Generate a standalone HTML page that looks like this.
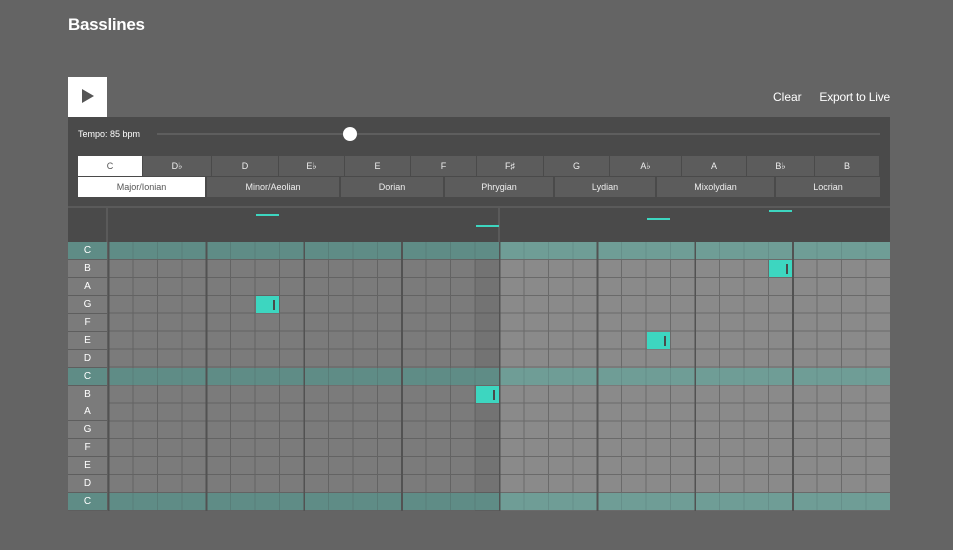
<!DOCTYPE html><html><head><style>
body{margin:0;width:953px;height:550px;background:#646464;font-family:"Liberation Sans",sans-serif;color:#fff;position:relative;overflow:hidden}
.a{position:absolute}
.k{position:absolute;top:156px;height:20px;background:#5c5c5c;font-size:9px;line-height:20px;text-align:center;box-sizing:border-box;border-right:1px solid #4a4a4a;color:#eee}
.m{position:absolute;top:177px;height:20px;background:#5c5c5c;font-size:9px;line-height:20px;text-align:center;box-sizing:border-box;border-right:2px solid #4a4a4a;color:#eee}
.half{position:absolute;top:242px;height:269px;width:391px}
.lab{position:absolute;left:68px;width:39px;height:17px;font-size:10px;line-height:17px;text-align:center;background:#7b7b7b}
.n{position:absolute;width:23px;height:17px;background:#3dd6c0}
.n:after{content:"";position:absolute;right:4px;top:4px;width:2px;height:10px;background:#4a4a4a}
.t{position:absolute;height:2px;width:23px;background:#3dd6c0}
</style></head><body>
<div class="a" style="left:68px;top:15px;font-size:17px;font-weight:bold;letter-spacing:-0.3px">Basslines</div>
<div class="a" style="left:68px;top:77px;width:39px;height:40px;background:#fff"></div>
<div class="a" style="left:82px;top:89px;width:0;height:0;border-left:12px solid #555;border-top:7px solid transparent;border-bottom:7px solid transparent"></div>
<div class="a" style="left:773px;top:90px;font-size:12px">Clear</div>
<div class="a" style="right:63px;top:90px;font-size:12px;letter-spacing:-0.2px">Export to Live</div>
<div class="a" style="left:68px;top:117px;width:822px;height:125px;background:#4a4a4a"></div>
<div class="a" style="left:78px;top:129px;font-size:9px">Tempo: 85 bpm</div>
<div class="a" style="left:157px;top:133px;width:723px;height:2px;background:#5e5e5e"></div>
<div class="a" style="left:343px;top:127px;width:14px;height:14px;border-radius:50%;background:#fff"></div>
<div class="k" style="left:78px;width:65px;background:#fff;color:#555">C</div>
<div class="k" style="left:143px;width:69px">D♭</div>
<div class="k" style="left:212px;width:67px">D</div>
<div class="k" style="left:279px;width:66px">E♭</div>
<div class="k" style="left:345px;width:66px">E</div>
<div class="k" style="left:411px;width:66px">F</div>
<div class="k" style="left:477px;width:67px">F♯</div>
<div class="k" style="left:544px;width:66px">G</div>
<div class="k" style="left:610px;width:72px">A♭</div>
<div class="k" style="left:682px;width:65px">A</div>
<div class="k" style="left:747px;width:68px">B♭</div>
<div class="k" style="left:815px;width:65px">B</div>
<div class="m" style="left:78px;width:129px;background:#fff;color:#555">Major/Ionian</div>
<div class="m" style="left:207px;width:134px">Minor/Aeolian</div>
<div class="m" style="left:341px;width:104px">Dorian</div>
<div class="m" style="left:445px;width:110px">Phrygian</div>
<div class="m" style="left:555px;width:102px">Lydian</div>
<div class="m" style="left:657px;width:119px">Mixolydian</div>
<div class="m" style="left:776px;width:104px;border-right:0">Locrian</div>
<div class="a" style="left:68px;top:206px;width:822px;height:2px;background:#5a5a5a"></div>
<div class="a" style="left:106px;top:208px;width:2px;height:34px;background:#5a5a5a"></div>
<div class="a" style="left:498px;top:208px;width:2px;height:34px;background:#5a5a5a"></div>
<div class="t" style="left:256px;top:214px"></div>
<div class="t" style="left:476px;top:225px"></div>
<div class="t" style="left:647px;top:218px"></div>
<div class="t" style="left:769px;top:210px"></div>
<div class="a" style="left:68px;top:242px;width:822px;height:269px;background:#5e5e5e"></div>
<div class="half" style="left:108px;background:repeating-linear-gradient(90deg,#525252 0 1.5px,transparent 1.5px 97.75px),repeating-linear-gradient(180deg,transparent 0 16.93px,#636363 16.93px 17.93px),repeating-linear-gradient(90deg,#636363 0 1px,#7b7b7b 1px 24.44px)"></div>
<div class="half" style="left:499px;background:repeating-linear-gradient(90deg,#525252 0 1.5px,transparent 1.5px 97.75px),repeating-linear-gradient(180deg,transparent 0 16.93px,#6a6a6a 16.93px 17.93px),repeating-linear-gradient(90deg,#6a6a6a 0 1px,#8a8a8a 1px 24.44px)"></div>
<div class="a" style="left:475px;top:242px;width:24px;height:269px;background:rgba(0,0,0,0.06)"></div>
<div class="half" style="left:108px;height:17px;top:242px;background:repeating-linear-gradient(90deg,#525252 0 1.5px,transparent 1.5px 97.75px),repeating-linear-gradient(90deg,#587e79 0 1px,#5f8c86 1px 24.44px)"></div>
<div class="half" style="left:108px;height:17px;top:368px;background:repeating-linear-gradient(90deg,#525252 0 1.5px,transparent 1.5px 97.75px),repeating-linear-gradient(90deg,#587e79 0 1px,#5f8c86 1px 24.44px)"></div>
<div class="half" style="left:108px;height:17px;top:493px;background:repeating-linear-gradient(90deg,#525252 0 1.5px,transparent 1.5px 97.75px),repeating-linear-gradient(90deg,#587e79 0 1px,#5f8c86 1px 24.44px)"></div>
<div class="half" style="left:499px;height:17px;top:242px;background:repeating-linear-gradient(90deg,#525252 0 1.5px,transparent 1.5px 97.75px),repeating-linear-gradient(90deg,#668f8a 0 1px,#6f9d96 1px 24.44px)"></div>
<div class="half" style="left:499px;height:17px;top:368px;background:repeating-linear-gradient(90deg,#525252 0 1.5px,transparent 1.5px 97.75px),repeating-linear-gradient(90deg,#668f8a 0 1px,#6f9d96 1px 24.44px)"></div>
<div class="half" style="left:499px;height:17px;top:493px;background:repeating-linear-gradient(90deg,#525252 0 1.5px,transparent 1.5px 97.75px),repeating-linear-gradient(90deg,#668f8a 0 1px,#6f9d96 1px 24.44px)"></div>
<div class="lab" style="top:242px;background:#5f8c86">C</div>
<div class="lab" style="top:260px">B</div>
<div class="lab" style="top:278px">A</div>
<div class="lab" style="top:296px">G</div>
<div class="lab" style="top:314px">F</div>
<div class="lab" style="top:332px">E</div>
<div class="lab" style="top:350px">D</div>
<div class="lab" style="top:368px;background:#5f8c86">C</div>
<div class="lab" style="top:386px">B</div>
<div class="lab" style="top:403px">A</div>
<div class="lab" style="top:421px">G</div>
<div class="lab" style="top:439px">F</div>
<div class="lab" style="top:457px">E</div>
<div class="lab" style="top:475px">D</div>
<div class="lab" style="top:493px;background:#5f8c86">C</div>
<div class="n" style="left:256px;top:296px"></div>
<div class="n" style="left:476px;top:386px"></div>
<div class="n" style="left:647px;top:332px"></div>
<div class="n" style="left:769px;top:260px"></div>
</body></html>
